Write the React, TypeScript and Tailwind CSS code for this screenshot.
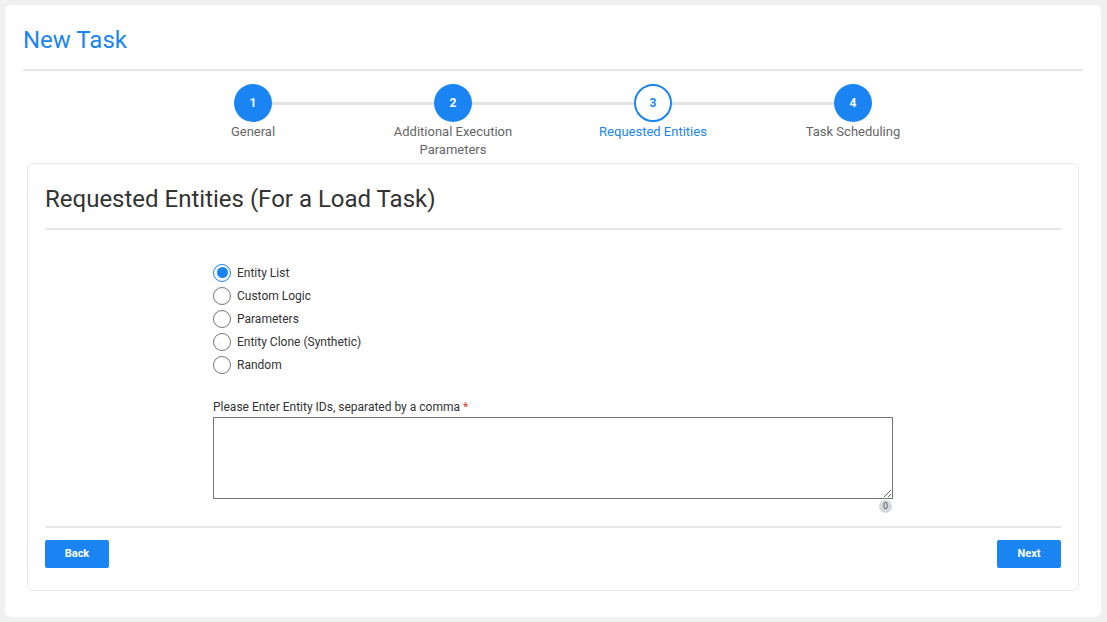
const steps = [
  { n: 1, label: 'General' },
  { n: 2, label: 'Additional Execution Parameters' },
  { n: 3, label: 'Requested Entities' },
  { n: 4, label: 'Task Scheduling' },
]

const current = 3

const options = ['Entity List', 'Custom Logic', 'Parameters', 'Entity Clone (Synthetic)', 'Random']

function Stepper() {
  return (
    <div className="flex justify-center mt-[13px]">
      {steps.map((step, i) => {
        const active = step.n === current
        return (
          <div key={step.n} className="w-[200px] flex flex-col items-center">
            <div className="flex items-center w-full">
              <div className={`flex-1 h-[3px] ${i === 0 ? 'bg-transparent' : 'bg-[#e2e2e2]'}`} />
              <div
                className={
                  active
                    ? 'w-[38px] h-[38px] rounded-full border-2 border-[#1a85f2] bg-white text-[#1a85f2] flex items-center justify-center text-[12px] font-bold'
                    : 'w-[38px] h-[38px] rounded-full bg-[#1a85f2] text-white flex items-center justify-center text-[12px] font-bold'
                }
              >
                {step.n}
              </div>
              <div className={`flex-1 h-[3px] ${i === steps.length - 1 ? 'bg-transparent' : 'bg-[#e2e2e2]'}`} />
            </div>
            <p
              className={`w-[150px] pt-[1px] text-center text-[13px] leading-[18px] ${
                active ? 'text-[#1a85f2]' : 'text-[#666666]'
              }`}
            >
              {step.label}
            </p>
          </div>
        )
      })}
    </div>
  )
}

function Radio({ label, checked }: { label: string; checked: boolean }) {
  return (
    <label className="flex items-center h-[23px] cursor-pointer">
      {checked ? (
        <span className="w-[18px] h-[18px] rounded-full border-[1.5px] border-[#1a85f2] flex items-center justify-center">
          <span className="w-[11px] h-[11px] rounded-full bg-[#1a85f2]" />
        </span>
      ) : (
        <span className="w-[18px] h-[18px] rounded-full border border-[#767676] bg-white" />
      )}
      <span className="ml-[6px] text-[12px] text-[#333333]">{label}</span>
    </label>
  )
}

export default function App() {
  return (
    <div className="min-h-screen bg-[#f0f0f0] pt-[5px] pl-[5px] pr-[6px] pb-[6px] font-['Roboto',sans-serif]">
      <div className="bg-white rounded-[6px] px-[18px] pt-[19px] pb-[26px]">
        {/* Header */}
        <h1 className="text-[24px] leading-[32px] text-[#1a85f2]">New Task</h1>
        <div className="mt-[13px] h-[2px] bg-[#e6e6e6]" />

        <Stepper />

        {/* Step content */}
        <div className="mt-[4px] ml-[4px] mr-[4px] border border-[#e8e8e8] rounded-[6px] px-[17px] pt-[19px] pb-[22px]">
          <h2 className="text-[24px] leading-[32px] text-[#333333]">Requested Entities (For a Load Task)</h2>
          <div className="mt-[13px] h-[2px] bg-[#e6e6e6]" />

          <div className="ml-[168px] w-[680px] mt-[31px]">
            <div className="flex flex-col">
              {options.map((opt, i) => (
                <Radio key={opt} label={opt} checked={i === 0} />
              ))}
            </div>

            <p className="mt-[23px] text-[12px] leading-[16px] text-[#333333]">
              Please Enter Entity IDs, separated by a comma <span className="text-[#e53935]">*</span>
            </p>
            <textarea className="mt-[2px] block w-full h-[82px] border border-[#767676] outline-none text-[12px] p-1" />
            <div className="flex justify-end mt-[1px] pr-[1px]">
              <span className="w-[13px] h-[13px] rounded-full bg-[#d5d9de] text-[#555555] text-[9px] leading-[13px] text-center">
                0
              </span>
            </div>
          </div>

          <div className="mt-[13px] h-[2px] bg-[#e6e6e6]" />
          <div className="flex justify-between mt-[12px]">
            <button className="w-[64px] h-[28px] pt-[1px] rounded-[2px] bg-[#1a85f2] text-white text-[11px] font-bold">Back</button>
            <button className="w-[64px] h-[28px] pt-[1px] rounded-[2px] bg-[#1a85f2] text-white text-[11px] font-bold">Next</button>
          </div>
        </div>
      </div>
    </div>
  )
}
